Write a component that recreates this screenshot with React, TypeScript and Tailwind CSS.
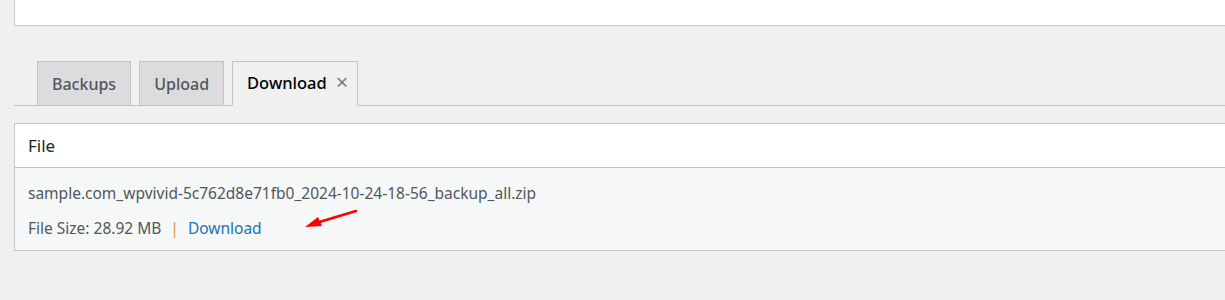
import React from 'react';

const tabs = ['Backups', 'Upload'];

const App = () => {
  return (
    <div className="h-[300px] w-[1225px] overflow-hidden bg-[#f0f0f1] font-['Noto_Sans',sans-serif]">
      {/* top panel, cut off by the window */}
      <div className="ml-[14px] h-[26px] w-[1240px] border border-t-0 border-[#c3c4c7] bg-white" />

      {/* tab strip */}
      <div className="mt-[35px] ml-[14px] flex h-[45px] items-end gap-[8px] border-b border-[#c3c4c7] pl-[23px]">
        {tabs.map((t) => (
          <div
            key={t}
            className="-mb-px flex h-[45px] items-center border border-[#c3c4c7] bg-[#dcdcde] px-[14px] text-[16px] font-medium text-[#50575e]"
          >
            {t}
          </div>
        ))}
        <div className="-mb-px flex h-[45px] items-center gap-[9px] border border-b-[#f0f0f1] border-[#c3c4c7] bg-[#f0f0f1] pl-[14px] pr-[9px] text-[16.5px] font-medium text-black">
          <span>Download</span>
          <span className="-mt-[6px] text-[22px] font-normal leading-none text-[#787c82]">×</span>
        </div>
      </div>

      {/* file table */}
      <div className="mt-[17px] ml-[14px] w-[1240px] border border-[#c3c4c7]">
        <div className="flex h-[44px] items-center border-b border-[#c3c4c7] bg-white pl-[13px] text-[17px] text-[#1d2327]">
          File
        </div>
        <div className="relative h-[82px] bg-[#f6f7f7] pl-[13px] pt-[14px] text-[15.5px] text-[#50575e]">
          <div>sample.com_wpvivid-5c762d8e71fb0_2024-10-24-18-56_backup_all.zip</div>
          <div className="mt-[12px] flex items-center">
            <span>File Size: 28.92 MB</span>
            <span className="mx-[9px] text-[#c79c3a]">|</span>
            <a className="text-[#2271b1]">Download</a>
          </div>
          <svg className="absolute left-[290px] top-[37px]" width="72" height="30" viewBox="0 0 72 30">
            <line x1="51" y1="6" x2="11" y2="18" stroke="#ff0000" strokeWidth="2.5" strokeLinecap="round" />
            <polygon points="0,22 13,12 17,21" fill="#ff0000" />
          </svg>
        </div>
      </div>
    </div>
  );
};

export default App;
